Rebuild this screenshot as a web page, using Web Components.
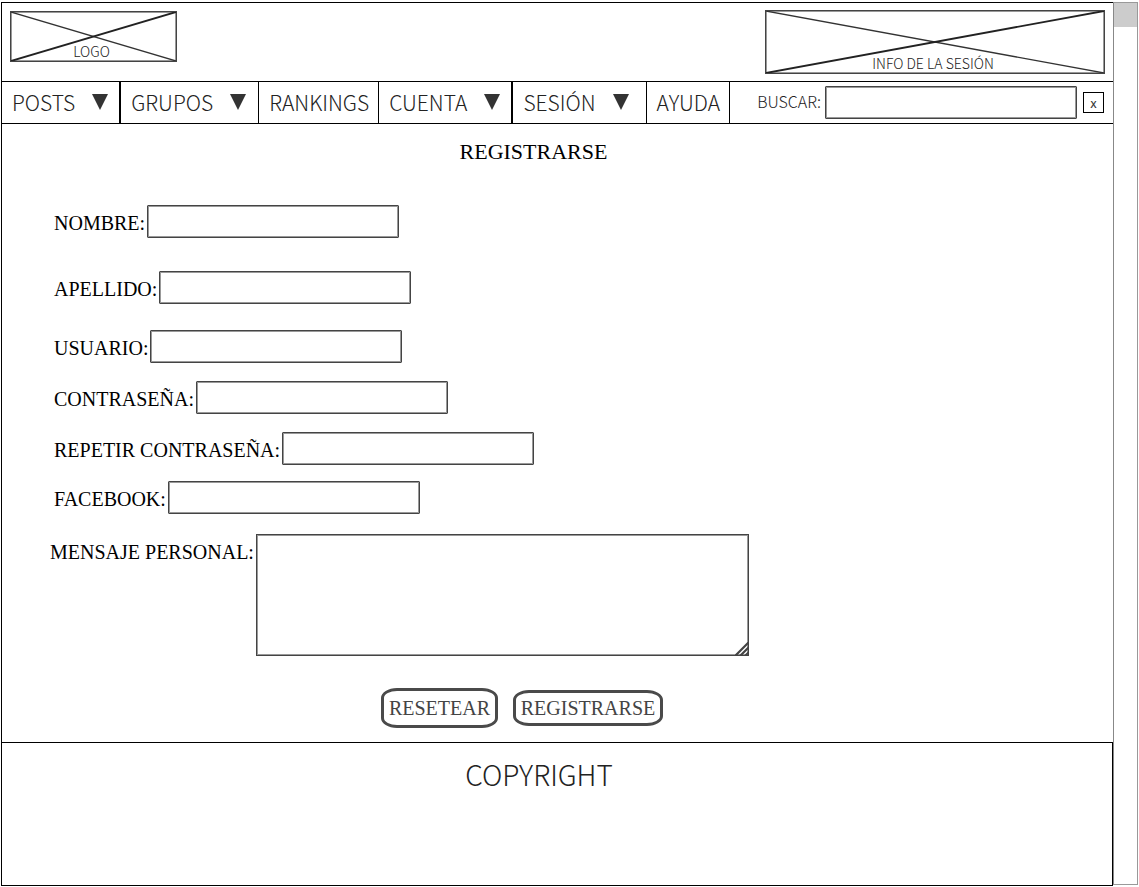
<!DOCTYPE html>
<html lang="es">
<head>
<meta charset="utf-8">
<title>Registrarse</title>
<style>
  html, body { margin: 0; background: #fff; }
  body { font-family: "Noto Sans CJK JP", "Noto Sans", sans-serif; font-weight: 300; color: #222; }
</style>
</head>
<body>
<app-page></app-page>

<template id="app-page">
  <style>
    :host { display: grid; grid-template-columns: 1fr 25px; box-sizing: border-box; min-height: 100vh; padding: 2px 1px 1px; }
    .window { display: flex; flex-direction: column; border: solid #000; border-width: 1px 0 1px 1px; }
    header { display: flex; justify-content: space-between; align-items: flex-start; box-sizing: border-box; height: 78px; padding: 7px 8px 0; }
    .logo { width: 167px; height: 51px; margin-top: 1px; }
    .session { width: 340px; height: 64px; }
    nav { display: flex; align-items: stretch; height: 41px; border: solid #000; border-width: 1px 0; }
    main { flex: 1; }
    footer { box-sizing: border-box; height: 143px; border: solid #000; border-width: 1px 1px 0 0; padding: 11px 36px 0 0; text-align: center; font-size: 28px; line-height: 40px; }
  </style>
  <div class="window">
    <header>
      <image-box class="logo">LOGO</image-box>
      <image-box class="session">INFO DE LA SESIÓN</image-box>
    </header>
    <nav>
      <nav-item menu strong>POSTS</nav-item>
      <nav-item menu>GRUPOS</nav-item>
      <nav-item>RANKINGS</nav-item>
      <nav-item menu strong>CUENTA</nav-item>
      <nav-item menu wide>SESIÓN</nav-item>
      <nav-item>AYUDA</nav-item>
      <search-box></search-box>
    </nav>
    <main><register-form></register-form></main>
    <footer>COPYRIGHT</footer>
  </div>
  <side-scroll></side-scroll>
</template>

<template id="image-box">
  <style>
    :host { display: grid; grid-template: 100% / 100%; font-size: 14px; line-height: 22px; }
    svg, span { grid-area: 1 / 1; }
    svg { width: 100%; height: 100%; box-sizing: border-box; border: 1px solid #444; box-shadow: inset 0 0 0 1px #999; }
    span { align-self: end; text-align: center; padding-right: 4px; }
    line { vector-effect: non-scaling-stroke; stroke: #333; stroke-width: 1.3; }
    .rise { stroke: #222; stroke-width: 1.9; }
  </style>
  <svg viewBox="0 0 100 100" preserveAspectRatio="none" aria-hidden="true">
    <line x1="0" y1="0" x2="100" y2="100"/>
    <line class="rise" x1="0" y1="100" x2="100" y2="0"/>
  </svg>
  <span><slot></slot></span>
</template>

<template id="nav-item">
  <style>
    :host { display: flex; border-right: 1px solid #000; }
    :host([strong]) { border-right-width: 2px; }
    a { display: flex; align-items: center; gap: 17px; padding: 0 9px 0 10px; color: #222; text-decoration: none; font-size: 21px; line-height: 38px; height: 39px; }
    svg { display: none; width: 16px; height: 16px; fill: #333; }
    :host([menu]) svg { display: block; }
    :host([menu]) a { padding-right: 12px; }
    :host([menu][strong]) a { padding-right: 11px; }
    :host([wide]) a { padding-right: 17px; }
  </style>
  <a href="#"><span><slot></slot></span><svg viewBox="0 0 16 16" aria-hidden="true"><path d="M0 0H16L8 16Z"/></svg></a>
</template>

<template id="search-box">
  <style>
    :host { display: flex; flex: 1; align-items: center; justify-content: flex-end; padding-right: 9px; }
    label { font-size: 16px; line-height: 38px; height: 41px; margin-right: 4px; }
    input { box-sizing: border-box; width: 252px; height: 33px; border: 1px solid #444; box-shadow: inset 0 0 0 1px #999; border-radius: 1px; margin: 0 6px 0 0; background: #fff; }
    button { box-sizing: border-box; width: 21px; height: 21px; padding: 0; border: 1px solid #000; background: #fff; color: #333; font: 400 13px/16px "Noto Sans CJK JP", sans-serif; }
  </style>
  <label for="q">BUSCAR:</label><input id="q" type="text"><button type="button">x</button>
</template>

<template id="form-field">
  <style>
    :host { display: flex; align-items: flex-start; gap: 2px; }
    label { padding-top: 3px; line-height: 30px; white-space: nowrap; }
    input, textarea { display: block; box-sizing: border-box; margin: 0; border: 1px solid #444; box-shadow: inset 0 0 0 1px #999; border-radius: 1px; background: #fff; resize: none; }
    input { width: 252px; height: 33px; }
    textarea { width: 493px; height: 122px; border-radius: 0; }
    .box { position: relative; }
    svg { position: absolute; right: 0; bottom: 0; width: 14px; height: 14px; }
  </style>
  <label for="control"></label>
  <div class="box"></div>
</template>

<template id="register-form">
  <style>
    :host { display: block; font-family: "Liberation Serif", serif; font-weight: 400; font-size: 20px; color: #000; }
    h1 { margin: 0; padding: 12px 48px 0 0; text-align: center; font-size: 22px; font-weight: 400; line-height: 32px; }
    form { display: flex; flex-direction: column; padding: 37px 0 0 52px; }
    form-field { margin-bottom: 18px; }
    .far { margin-bottom: 33px; }
    .mid { margin-bottom: 26px; }
    .near { margin-bottom: 16px; }
    .message { margin: 2px 0 32px -4px; }
    .actions { display: flex; justify-content: center; align-items: center; gap: 15px; margin-left: -52px; padding: 0 71px 14px 0; }
    button { box-sizing: border-box; border: 3px solid #4a4a4a; border-radius: 16px / 10px; background: #fff; color: #444; font: 400 20px/24px "Liberation Serif", serif; padding: 0; }
    .reset { width: 117px; height: 40px; }
    .submit { width: 150px; height: 36px; }
  </style>
  <h1>REGISTRARSE</h1>
  <form>
    <form-field class="far" label="NOMBRE:"></form-field>
    <form-field class="mid" label="APELLIDO:"></form-field>
    <form-field label="USUARIO:"></form-field>
    <form-field label="CONTRASEÑA:" type="password"></form-field>
    <form-field class="near" label="REPETIR CONTRASEÑA:" type="password"></form-field>
    <form-field label="FACEBOOK:"></form-field>
    <form-field class="message" label="MENSAJE PERSONAL:" type="multiline"></form-field>
    <div class="actions">
      <button class="reset" type="reset">RESETEAR</button>
      <button class="submit" type="submit">REGISTRARSE</button>
    </div>
  </form>
</template>

<template id="side-scroll">
  <style>
    :host { display: block; box-sizing: border-box; margin: 0 0 1px; border: 1px solid #999; border-left-color: #888; background: #fff; }
    div { height: 24px; background: #ccc; }
  </style>
  <div></div>
</template>

<script>
  class Base extends HTMLElement {
    constructor() {
      super();
      this.attachShadow({ mode: 'open' })
        .append(document.getElementById(this.localName).content.cloneNode(true));
    }
  }
  class FormField extends Base {
    connectedCallback() {
      const type = this.getAttribute('type') || 'text';
      const box = this.shadowRoot.querySelector('.box');
      this.shadowRoot.querySelector('label').textContent = this.getAttribute('label');
      box.innerHTML = type === 'multiline'
        ? '<textarea id="control"></textarea><svg viewBox="0 0 14 14" aria-hidden="true"><path d="M0 14L14 0M5 14L14 5M10 14L14 10" stroke="#444" stroke-width="2.2"/></svg>'
        : `<input id="control" type="${type}">`;
    }
  }
  for (const name of ['image-box', 'nav-item', 'search-box', 'side-scroll', 'register-form', 'app-page'])
    customElements.define(name, class extends Base {});
  customElements.define('form-field', FormField);
</script>
</body>
</html>
